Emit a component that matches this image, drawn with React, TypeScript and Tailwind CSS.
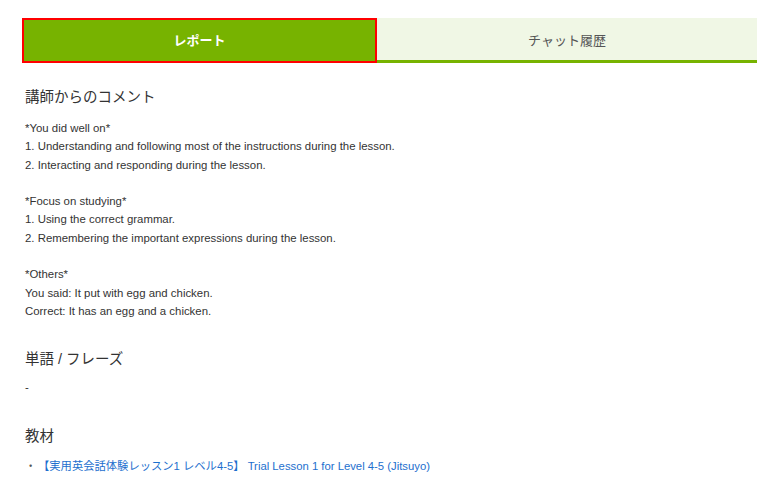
import React from "react";

const font = "font-['Liberation_Sans','Noto_Sans_CJK_JP',sans-serif]";

const comment = [
  "*You did well on*",
  "1. Understanding and following most of the instructions during the lesson.",
  "2. Interacting and responding during the lesson.",
  "",
  "*Focus on studying*",
  "1. Using the correct grammar.",
  "2. Remembering the important expressions during the lesson.",
  "",
  "*Others*",
  "You said: It put with egg and chicken.",
  "Correct: It has an egg and a chicken.",
];

const Heading = ({ children, className }: { children: React.ReactNode; className?: string }) => (
  <h2 className={`text-[14.5px] leading-6 text-[#333] ${className ?? ""}`}>{children}</h2>
);

const App = () => {
  return (
    <div className={`w-[780px] h-[492px] bg-white px-[22px] pt-[18px] ${font}`}>
      {/* tabs */}
      <div className="flex h-[45px] w-[735px]">
        <div className="w-[355px] flex items-center justify-center bg-[#77b300] border-2 border-[#ff0000] text-white text-[13px] font-bold">
          レポート
        </div>
        <div className="flex-1 flex items-center justify-center bg-[#f0f7e5] border-b-[3px] border-[#77b300] text-[#555] text-[13px] pt-[3px]">
          チャット履歴
        </div>
      </div>

      <div className="pl-[3px]">
        <Heading className="mt-[22px]">講師からのコメント</Heading>
        <div className="mt-[10px] text-[11.4px] leading-[18.3px] text-[#333]">
          {comment.map((line, i) => (
            <p key={i} className="h-[18.3px]">
              {line}
            </p>
          ))}
        </div>

        <Heading className="mt-[27px]">単語 / フレーズ</Heading>
        <p className="mt-[7px] text-[11.4px] leading-[18.3px] text-[#333]">-</p>

        <Heading className="mt-[27px]">教材</Heading>
        <div className="mt-[9px] text-[11.3px] leading-[18px] flex">
          <span className="text-[#555] w-[13px] shrink-0">・</span>
          <a href="#" className="text-[#1d6fce]">
            【実用英会話体験レッスン1 レベル4-5】 Trial Lesson 1 for Level 4-5 (Jitsuyo)
          </a>
        </div>
      </div>
    </div>
  );
};

export default App;
